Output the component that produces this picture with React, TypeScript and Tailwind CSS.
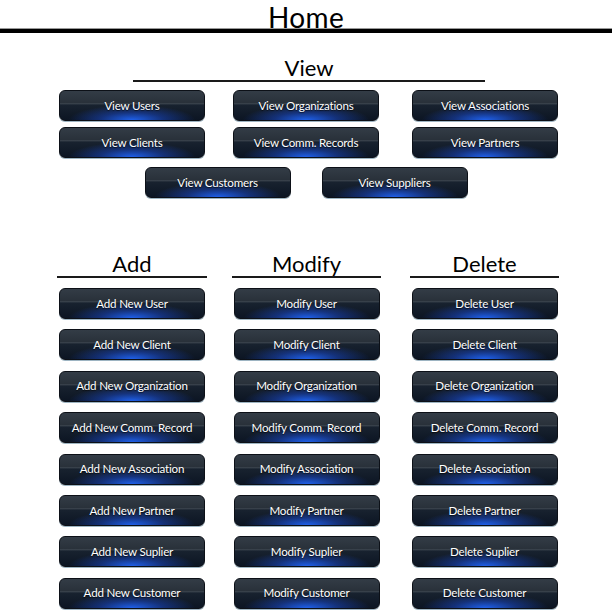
const font = { fontFamily: "Lato, 'Liberation Sans', sans-serif" };

function GlossButton({ label }: { label: string }) {
  return (
    <div className="w-[146px] h-[31px] shrink-0 rounded-[6px] border border-[#0c1017] shadow-[0_1px_0_#9db4c2] bg-[radial-gradient(ellipse_55%_65%_at_50%_100%,#1f60ea_0%,rgba(25,70,190,0.55)_40%,transparent_80%),linear-gradient(to_bottom,#333c46_0%,#29313a_40%,#3b444e_44%,#18222f_48%,#0c1523_100%)] flex items-center justify-center text-white text-[11.6px] tracking-[-0.2px] leading-none [text-shadow:0_1px_1px_rgba(0,0,0,0.6)]">
      {label}
    </div>
  );
}

function SectionHeading({ title, width }: { title: string; width: string }) {
  return (
    <div className={width}>
      <div className="text-center text-[22px] leading-[24px] text-black">{title}</div>
      <div className="h-[2px] bg-[#1a1a1a]" />
    </div>
  );
}

const columns = [
  {
    title: "Add",
    items: [
      "Add New User",
      "Add New Client",
      "Add New Organization",
      "Add New Comm. Record",
      "Add New Association",
      "Add New Partner",
      "Add New Suplier",
      "Add New Customer",
    ],
  },
  {
    title: "Modify",
    items: [
      "Modify User",
      "Modify Client",
      "Modify Organization",
      "Modify Comm. Record",
      "Modify Association",
      "Modify Partner",
      "Modify Suplier",
      "Modify Customer",
    ],
  },
  {
    title: "Delete",
    items: [
      "Delete User",
      "Delete Client",
      "Delete Organization",
      "Delete Comm. Record",
      "Delete Association",
      "Delete Partner",
      "Delete Suplier",
      "Delete Customer",
    ],
  },
];

export default function App() {
  return (
    <div className="w-[612px] h-[612px] bg-white overflow-hidden" style={font}>
      {/* title bar */}
      <div className="h-[28px] flex justify-center">
        <span className="block text-[28px] leading-[34px] text-black tracking-[0.4px]">Home</span>
      </div>
      <div className="relative h-[5px] border-t border-[#999] bg-black" />

      {/* view section */}
      <div className="mt-[23px] pl-[133px]">
        <SectionHeading title="View" width="w-[352px]" />
      </div>
      <div className="mt-[8px] flex pl-[59px]">
        <GlossButton label="View Users" />
        <div className="ml-[28px]">
          <GlossButton label="View Organizations" />
        </div>
        <div className="ml-[33px]">
          <GlossButton label="View Associations" />
        </div>
      </div>
      <div className="mt-[6px] flex pl-[59px]">
        <GlossButton label="View Clients" />
        <div className="ml-[28px]">
          <GlossButton label="View Comm. Records" />
        </div>
        <div className="ml-[33px]">
          <GlossButton label="View Partners" />
        </div>
      </div>
      <div className="mt-[9px] flex justify-center gap-[31px]">
        <GlossButton label="View Customers" />
        <GlossButton label="View Suppliers" />
      </div>

      {/* add / modify / delete */}
      <div className="mt-[54px] flex pl-[57px]">
        {columns.map((col, i) => (
          <div
            key={col.title}
            className={
              i === 0 ? "w-[150px]" : i === 1 ? "w-[149px] ml-[25px]" : "w-[149px] ml-[29px]"
            }
          >
            <SectionHeading title={col.title} width="w-full" />
            <div className="mt-[10px] flex flex-col gap-[10.4px] items-center">
              {col.items.map((item) => (
                <GlossButton key={item} label={item} />
              ))}
            </div>
          </div>
        ))}
      </div>
    </div>
  );
}
